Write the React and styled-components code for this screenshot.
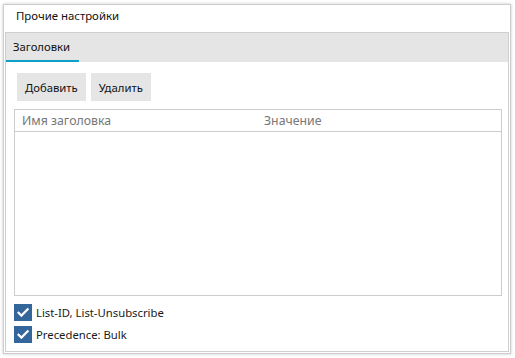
import React from "react";
import styled, { createGlobalStyle } from "styled-components";

const Global = createGlobalStyle`
  html, body { margin: 0; padding: 0; background: #ffffff; }
  body { font-family: "Noto Sans", "Open Sans", "DejaVu Sans", sans-serif; font-size: 11.3px; color: #1a1a1a; }
  #root { padding: 4px 4px 4px 3px; }
`;

const Window = styled.div`
  width: 508px;
  height: 350px;
  box-sizing: border-box;
  border: 1px solid #cdcdcd;
  background: #fff;
  box-shadow: 0 0 3px rgba(0, 0, 0, 0.22);
  display: flex;
  flex-direction: column;
`;

const Title = styled.div`
  height: 29px;
  box-sizing: border-box;
  padding: 3px 0 0 12px;
  line-height: 16px;
  font-size: 11.4px;
  color: #111;
`;

const Panel = styled.div`
  flex: 1;
  margin: 0 1px 1px 1px;
  border: 1px solid #cfcfcf;
  display: flex;
  flex-direction: column;
`;

const TabBar = styled.div`
  height: 29px;
  background: #e5e5e5;
  display: flex;
  align-items: stretch;
`;

const Tab = styled.div`
  width: 73px;
  padding-left: 7px;
  display: flex;
  align-items: center;
  box-sizing: border-box;
  border-bottom: 2px solid ${(p) => (p.$active ? "#0e9fc6" : "transparent")};
  color: #111;
`;

const Content = styled.div`
  flex: 1;
  display: flex;
  flex-direction: column;
  padding: 11px 6px 8px 8px;
`;

const Toolbar = styled.div`
  display: flex;
  gap: 5px;
  padding-left: 3px;
`;

const Button = styled.button`
  height: 28px;
  border: none;
  background: #e5e5e5;
  font: inherit;
  color: #111;
  padding: 0 8px;
  cursor: pointer;
`;

const Table = styled.div`
  margin-top: 8px;
  height: 185px;
  border: 1px solid #cccccc;
  display: flex;
  flex-direction: column;
`;

const HeaderRow = styled.div`
  height: 21px;
  border-bottom: 1px solid #cccccc;
  display: grid;
  grid-template-columns: 242px 1fr;
  align-items: center;
  color: #777;
  font-size: 12.3px;
`;

const HeaderCell = styled.div`
  padding-left: 7px;
`;

const Options = styled.div`
  margin-top: 7px;
  display: flex;
  flex-direction: column;
  gap: 4px;
`;

const CheckRow = styled.label`
  display: flex;
  align-items: center;
  gap: 4px;
  height: 18px;
`;

const Box = styled.span`
  width: 18px;
  height: 17px;
  background: #33679b;
  display: inline-flex;
  align-items: center;
  justify-content: center;
`;

const Check = ({ label }) => (
  <CheckRow>
    <Box>
      <svg width="14" height="12" viewBox="0 0 14 12">
        <path d="M1.8 6 L5.4 9.6 L12.4 2.4" fill="none" stroke="#fff" strokeWidth="2.2" />
      </svg>
    </Box>
    <span>{label}</span>
  </CheckRow>
);

export default function App() {
  return (
    <>
      <Global />
      <Window>
        <Title>Прочие настройки</Title>
        <Panel>
          <TabBar>
            <Tab $active>Заголовки</Tab>
          </TabBar>
          <Content>
            <Toolbar>
              <Button>Добавить</Button>
              <Button>Удалить</Button>
            </Toolbar>
            <Table>
              <HeaderRow>
                <HeaderCell>Имя заголовка</HeaderCell>
                <HeaderCell>Значение</HeaderCell>
              </HeaderRow>
            </Table>
            <Options>
              <Check label="List-ID, List-Unsubscribe" />
              <Check label="Precedence: Bulk" />
            </Options>
          </Content>
        </Panel>
      </Window>
    </>
  );
}
